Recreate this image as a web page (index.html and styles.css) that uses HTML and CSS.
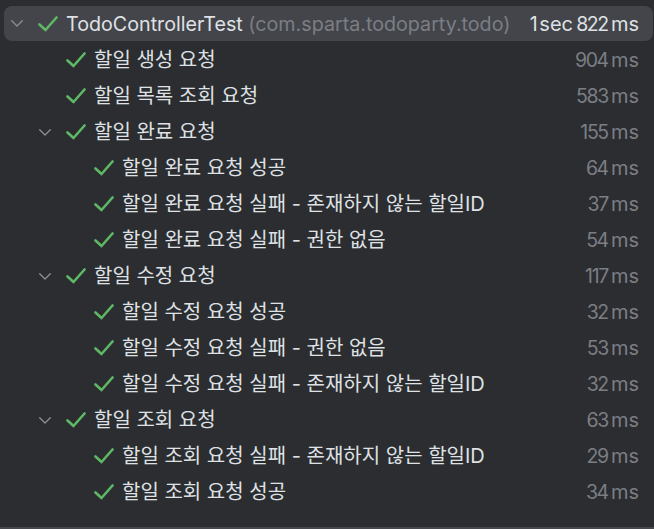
FILE: index.html
```html
<!DOCTYPE html>
<html lang="ko">
<head>
<meta charset="utf-8">
<title>TodoControllerTest</title>
<link rel="stylesheet" href="styles.css">
</head>
<body>
<div class="page">
  <div class="tree">
    <div class="row selected">
      <span class="slot"><svg class="chev" viewBox="0 0 12 7" width="12" height="7"><polyline points="0.7,0.7 6,6 11.3,0.7"/></svg></span>
      <span class="slot"><svg class="check" viewBox="0 0 20 16" width="20" height="16"><polyline points="1.5,8.5 7.5,14 18.5,1.5"/></svg></span>
      <span class="name"><span class="latin">TodoControllerTest <span class="pkg">(com.sparta.todoparty.todo)</span></span></span>
      <span class="time"><span class="num">1</span> sec <span class="num">822</span> ms</span>
    </div>
    <div class="row">
      <span class="indent"></span><span class="slot"></span>
      <span class="slot"><svg class="check" viewBox="0 0 20 16" width="20" height="16"><polyline points="1.5,8.5 7.5,14 18.5,1.5"/></svg></span>
      <span class="name">할일 생성 요청</span>
      <span class="time"><span class="num">904</span> ms</span>
    </div>
    <div class="row">
      <span class="indent"></span><span class="slot"></span>
      <span class="slot"><svg class="check" viewBox="0 0 20 16" width="20" height="16"><polyline points="1.5,8.5 7.5,14 18.5,1.5"/></svg></span>
      <span class="name">할일 목록 조회 요청</span>
      <span class="time"><span class="num">583</span> ms</span>
    </div>
    <div class="row">
      <span class="indent"></span>
      <span class="slot"><svg class="chev" viewBox="0 0 12 7" width="12" height="7"><polyline points="0.7,0.7 6,6 11.3,0.7"/></svg></span>
      <span class="slot"><svg class="check" viewBox="0 0 20 16" width="20" height="16"><polyline points="1.5,8.5 7.5,14 18.5,1.5"/></svg></span>
      <span class="name">할일 완료 요청</span>
      <span class="time"><span class="num">155</span> ms</span>
    </div>
    <div class="row">
      <span class="indent"></span><span class="indent"></span><span class="slot"></span>
      <span class="slot"><svg class="check" viewBox="0 0 20 16" width="20" height="16"><polyline points="1.5,8.5 7.5,14 18.5,1.5"/></svg></span>
      <span class="name">할일 완료 요청 성공</span>
      <span class="time"><span class="num">64</span> ms</span>
    </div>
    <div class="row">
      <span class="indent"></span><span class="indent"></span><span class="slot"></span>
      <span class="slot"><svg class="check" viewBox="0 0 20 16" width="20" height="16"><polyline points="1.5,8.5 7.5,14 18.5,1.5"/></svg></span>
      <span class="name">할일 완료 요청 실패 - 존재하지 않는 할일ID</span>
      <span class="time"><span class="num">37</span> ms</span>
    </div>
    <div class="row">
      <span class="indent"></span><span class="indent"></span><span class="slot"></span>
      <span class="slot"><svg class="check" viewBox="0 0 20 16" width="20" height="16"><polyline points="1.5,8.5 7.5,14 18.5,1.5"/></svg></span>
      <span class="name">할일 완료 요청 실패 - 권한 없음</span>
      <span class="time"><span class="num">54</span> ms</span>
    </div>
    <div class="row">
      <span class="indent"></span>
      <span class="slot"><svg class="chev" viewBox="0 0 12 7" width="12" height="7"><polyline points="0.7,0.7 6,6 11.3,0.7"/></svg></span>
      <span class="slot"><svg class="check" viewBox="0 0 20 16" width="20" height="16"><polyline points="1.5,8.5 7.5,14 18.5,1.5"/></svg></span>
      <span class="name">할일 수정 요청</span>
      <span class="time"><span class="num">117</span> ms</span>
    </div>
    <div class="row">
      <span class="indent"></span><span class="indent"></span><span class="slot"></span>
      <span class="slot"><svg class="check" viewBox="0 0 20 16" width="20" height="16"><polyline points="1.5,8.5 7.5,14 18.5,1.5"/></svg></span>
      <span class="name">할일 수정 요청 성공</span>
      <span class="time"><span class="num">32</span> ms</span>
    </div>
    <div class="row">
      <span class="indent"></span><span class="indent"></span><span class="slot"></span>
      <span class="slot"><svg class="check" viewBox="0 0 20 16" width="20" height="16"><polyline points="1.5,8.5 7.5,14 18.5,1.5"/></svg></span>
      <span class="name">할일 수정 요청 실패 - 권한 없음</span>
      <span class="time"><span class="num">53</span> ms</span>
    </div>
    <div class="row">
      <span class="indent"></span><span class="indent"></span><span class="slot"></span>
      <span class="slot"><svg class="check" viewBox="0 0 20 16" width="20" height="16"><polyline points="1.5,8.5 7.5,14 18.5,1.5"/></svg></span>
      <span class="name">할일 수정 요청 실패 - 존재하지 않는 할일ID</span>
      <span class="time"><span class="num">32</span> ms</span>
    </div>
    <div class="row">
      <span class="indent"></span>
      <span class="slot"><svg class="chev" viewBox="0 0 12 7" width="12" height="7"><polyline points="0.7,0.7 6,6 11.3,0.7"/></svg></span>
      <span class="slot"><svg class="check" viewBox="0 0 20 16" width="20" height="16"><polyline points="1.5,8.5 7.5,14 18.5,1.5"/></svg></span>
      <span class="name">할일 조회 요청</span>
      <span class="time"><span class="num">63</span> ms</span>
    </div>
    <div class="row">
      <span class="indent"></span><span class="indent"></span><span class="slot"></span>
      <span class="slot"><svg class="check" viewBox="0 0 20 16" width="20" height="16"><polyline points="1.5,8.5 7.5,14 18.5,1.5"/></svg></span>
      <span class="name">할일 조회 요청 실패 - 존재하지 않는 할일ID</span>
      <span class="time"><span class="num">29</span> ms</span>
    </div>
    <div class="row">
      <span class="indent"></span><span class="indent"></span><span class="slot"></span>
      <span class="slot"><svg class="check" viewBox="0 0 20 16" width="20" height="16"><polyline points="1.5,8.5 7.5,14 18.5,1.5"/></svg></span>
      <span class="name">할일 조회 요청 성공</span>
      <span class="time"><span class="num">34</span> ms</span>
    </div>
  </div>
  <div class="bottom-line"></div>
</div>
</body>
</html>
```
FILE: styles.css
```css
* { box-sizing: border-box; }
html, body {
  margin: 0;
  padding: 0;
  background: #2b2d30;
}
body {
  font-family: Inter, "Noto Sans CJK KR", sans-serif;
  font-size: 20px;
  color: #dfe1e5;
}
.page {
  height: 529px;
  display: flex;
  flex-direction: column;
}
.tree {
  flex: 1;
  padding-top: 6px;
}
.row {
  display: flex;
  align-items: center;
  height: 36px;
  line-height: 36px;
  margin: 0 1px 0 4px;
  padding: 0 14px 0 4px;
  white-space: nowrap;
  border-radius: 8px;
}
.row.selected {
  background: #43454a;
  height: 35px;
  margin-bottom: 1px;
}
.indent {
  width: 28px;
  flex: none;
}
.slot {
  width: 28px;
  flex: none;
  display: flex;
  align-items: center;
}
.chev {
  margin-left: 3px;
  fill: none;
  stroke: #8c8f95;
  stroke-width: 1.3;
  stroke-linecap: round;
  stroke-linejoin: round;
}
.check {
  margin-left: 2px;
  fill: none;
  stroke: #5fb865;
  stroke-width: 2.6;
  stroke-linecap: round;
  stroke-linejoin: round;
}
.name {
  flex: 1;
  margin-left: 2px;
}
.latin {
  font-size: 19.7px;
}
.pkg {
  color: #7b7e85;
}
.time {
  color: #7b7e85;
  word-spacing: -2.5px;
}
.num {
  font-size: 19.5px;
  font-feature-settings: "pnum" 1;
  letter-spacing: -1.4px;
}
.selected .time {
  color: #dfe1e5;
}
.bottom-line {
  height: 2px;
  background: #46484d;
}
```
